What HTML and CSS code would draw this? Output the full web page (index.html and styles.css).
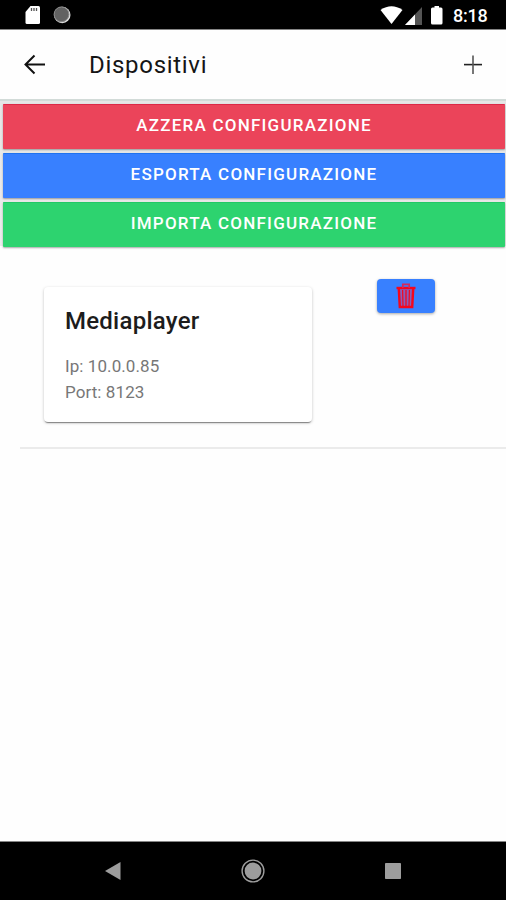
FILE: index.html
```html
<!DOCTYPE html>
<html lang="it">
<head>
<meta charset="utf-8">
<title>Dispositivi</title>
<link rel="stylesheet" href="styles.css">
</head>
<body>
<div class="status">
  <svg class="status-left" width="50" height="20" viewBox="0 0 50 20">
    <path d="M5.500 1H13.500Q15 1 15 2.500V17.500Q15 19 13.500 19H2Q.5 19 .5 17.500V7Z" fill="#fff"/>
    <path d="M6.500 3v3M9 3v3M11.500 3v3" stroke="#555" stroke-width="1.300"/>
    <circle cx="37.200" cy="10" r="8.300" fill="#ddd"/>
    <circle cx="36.500" cy="9.300" r="7.400" fill="#626262" stroke="#888" stroke-width="1"/>
  </svg>
  <svg class="status-right" width="64" height="20" viewBox="0 0 64 20">
    <path d="M.5 5Q11.500-2.500 22.500 5L11.500 19Z" fill="#fff"/>
    <path d="M42 2V20H25Z" fill="#555"/>
    <path d="M35 9.500V20H25Z" fill="#fff"/>
    <path d="M54.500 1h4.500v1.500h2q1.500 0 1.500 1.500v14q0 1.500-1.500 1.500h-8.500q-1.500 0-1.500-1.500V4q0-1.500 1.500-1.500h2Z" fill="#fff"/>
  </svg>
  <span class="clock">8:18</span>
</div>
<header class="toolbar">
  <svg class="back" width="22" height="22" viewBox="0 0 22 22"><path d="M21 10.500H2M10.500 1.500L1.500 10.500L10.500 19.500" fill="none" stroke="#111" stroke-width="2"/></svg>
  <h1>Dispositivi</h1>
  <svg class="add" width="18" height="20" viewBox="0 0 18 20"><path d="M0 9.600H18" stroke="#222" stroke-width="1.600"/><path d="M9 .5V19" stroke="#555" stroke-width="1.600"/></svg>
</header>
<main>
  <div class="actions">
    <button class="action danger">AZZERA CONFIGURAZIONE</button>
    <button class="action primary">ESPORTA CONFIGURAZIONE</button>
    <button class="action success">IMPORTA CONFIGURAZIONE</button>
  </div>
  <section class="device">
    <article class="card">
      <h2>Mediaplayer</h2>
      <p>Ip: 10.0.0.85<br>Port: 8123</p>
    </article>
    <button class="delete" aria-label="Elimina">
      <svg width="20" height="26" viewBox="0 0 20 26"><path d="M3 6H17L16 24H4Z" fill="#8a5cb8"/><g fill="none" stroke="#f4061c"><path d="M.5 5H19.500" stroke-width="2.400"/><path d="M6.800 5V1.300H13.200V5" stroke="#d6285a" stroke-width="1.700"/><path d="M2.800 6L3.800 24H16.200L17.200 6" stroke-width="2.400"/><path d="M6.600 7L7 23M13.400 7L13 23" stroke-width="1.200"/><path d="M10 7V23" stroke-width="1.300"/></g></svg>
    </button>
  </section>
</main>
<nav class="navbar">
  <svg width="16" height="18" viewBox="0 0 16 18"><path d="M0 9L15.500 0V18Z" fill="#9d9d9d"/></svg>
  <svg width="24" height="24" viewBox="0 0 24 24"><circle cx="12" cy="12" r="10.900" fill="none" stroke="#9d9d9d" stroke-width="1.400"/><circle cx="12" cy="12" r="8.400" fill="#9d9d9d"/></svg>
  <svg width="16" height="16" viewBox="0 0 16 16"><rect width="16" height="16" rx=".8" fill="#9d9d9d"/></svg>
</nav>
</body>
</html>
```
FILE: styles.css
```css
* { box-sizing: border-box; }
body {
  margin: 0;
  height: 900px;
  display: flex;
  flex-direction: column;
  overflow: hidden;
  background: #fefefe;
  font-family: Roboto, "Liberation Sans", sans-serif;
}
h1, h2, p { margin: 0; }
svg { display: block; flex: none; }
button { border: 0; padding: 0; font-family: inherit; }
.status {
  height: 30px;
  flex: none;
  display: flex;
  align-items: flex-start;
  padding: 5px 18px 0 25px;
  background: #000;
  border-bottom: 1px solid #858585;
}
.status-right { margin-left: auto; }
.clock {
  width: 35px;
  margin-left: 9px;
  color: #fff;
  font-size: 18px;
  font-weight: 500;
  line-height: 22px;
  letter-spacing: -0.2px;
}
.toolbar {
  height: 71px;
  flex: none;
  display: flex;
  align-items: center;
  padding: 0 24px;
  border-bottom: 2px solid #d2dbd8;
}
.toolbar h1 {
  margin-left: 43px;
  font-size: 24px;
  font-weight: 400;
  letter-spacing: 0.7px;
  color: #151515;
}
.add { margin-left: auto; }
main { flex: 1; }
.actions {
  display: flex;
  flex-direction: column;
  gap: 4.5px;
  padding: 3px 1px 0 3px;
  background: linear-gradient(#e6e6e6, #ececec) no-repeat 0 0 / 100% 145px;
}
.action {
  height: 44.5px;
  padding-bottom: 4px;
  border-radius: 1px;
  color: #fff;
  font-size: 17px;
  font-weight: 500;
  letter-spacing: 1.23px;
  box-shadow: 0 1px 2px rgba(0, 0, 0, 0.35);
}
.danger { background: #eb445a; border-top: 1px solid #dc2947; }
.primary { background: #3880ff; border-top: 1px solid #2072ef; }
.success { background: #2dd36f; border-top: 1px solid #20c965; }
.device {
  display: flex;
  align-items: flex-start;
  height: 202px;
  margin-left: 20px;
  padding: 40px 0 0 24px;
  border-bottom: 2px solid #ebebeb;
}
.card {
  width: 268px;
  height: 135px;
  padding: 19px 21px;
  border-radius: 4px;
  background: #fff;
  box-shadow: 0 2px 1px -1px rgba(0, 0, 0, 0.38), 0 1px 3px rgba(0, 0, 0, 0.25);
}
.card h2 {
  font-size: 24px;
  font-weight: 500;
  line-height: 30px;
  letter-spacing: 0.25px;
  color: #1c1c1c;
}
.card p {
  margin-top: 17px;
  font-size: 17px;
  line-height: 26px;
  letter-spacing: 0.08px;
  color: #777;
}
.delete {
  width: 58px;
  height: 34px;
  margin: -8px 0 0 65px;
  display: flex;
  align-items: center;
  justify-content: center;
  border-radius: 4px;
  background: #3880ff;
  box-shadow: 0 1px 3px rgba(0, 0, 0, 0.35);
}
.navbar {
  height: 59px;
  flex: none;
  display: flex;
  align-items: center;
  justify-content: space-between;
  padding: 0 105px;
  background: #000;
  border-top: 1px solid #858585;
}
```
